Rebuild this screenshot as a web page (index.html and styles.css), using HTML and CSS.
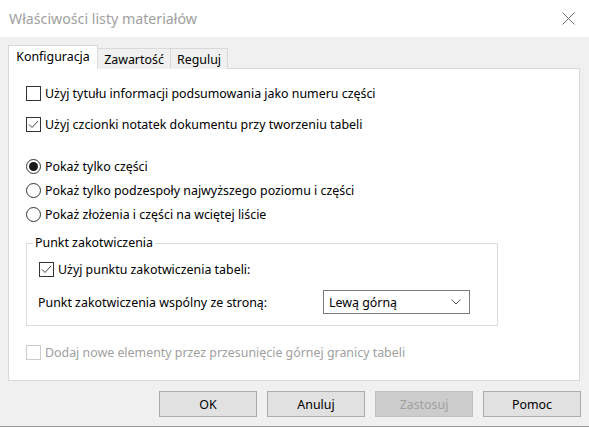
FILE: index.html
```html
<!DOCTYPE html>
<html lang="pl">
<head>
    <meta charset="UTF-8">
    <title>Właściwości listy materiałów</title>
    <link rel="stylesheet" href="styles.css">
</head>
<body>
    <div class="window">
        <div class="titlebar">
            <span class="title">Właściwości listy materiałów</span>
            <svg class="close" width="13" height="13" viewBox="0 0 13 13">
                <path d="M0.5 0.5 L12.5 12.5 M12.5 0.5 L0.5 12.5" stroke="#6e6e6e" stroke-width="1" fill="none"/>
            </svg>
        </div>

        <div class="dialog">
            <div class="tabs">
                <div class="tab tab-active tab-1">Konfiguracja</div>
                <div class="tab tab-2">Zawartość</div>
                <div class="tab tab-3">Reguluj</div>
            </div>

            <div class="panel">
                <label class="option">
                    <span class="box"></span>
                    Użyj tytułu informacji podsumowania jako numeru części
                </label>
                <label class="option opt-2">
                    <span class="box">
                        <svg width="13" height="13" viewBox="0 0 13 13"><path d="M2 6.5 L5 9.5 L11 3" stroke="#444" stroke-width="1" fill="none"/></svg>
                    </span>
                    Użyj czcionki notatek dokumentu przy tworzeniu tabeli
                </label>

                <label class="option radio-first">
                    <span class="radio radio-on"><span class="dot"></span></span>
                    Pokaż tylko części
                </label>
                <label class="option radio-next">
                    <span class="radio"></span>
                    Pokaż tylko podzespoły najwyższego poziomu i części
                </label>
                <label class="option radio-next">
                    <span class="radio"></span>
                    Pokaż złożenia i części na wciętej liście
                </label>

                <fieldset class="group">
                    <legend>Punkt zakotwiczenia</legend>
                    <label class="option group-check">
                        <span class="box">
                            <svg width="13" height="13" viewBox="0 0 13 13"><path d="M2 6.5 L5 9.5 L11 3" stroke="#444" stroke-width="1" fill="none"/></svg>
                        </span>
                        Użyj punktu zakotwiczenia tabeli:
                    </label>
                    <div class="anchor-row">
                        <span class="anchor-label">Punkt zakotwiczenia wspólny ze stroną:</span>
                        <div class="select">
                            <span>Lewą górną</span>
                            <svg width="10" height="6" viewBox="0 0 10 6"><path d="M0.5 0.5 L5 5 L9.5 0.5" stroke="#555" stroke-width="1" fill="none"/></svg>
                        </div>
                    </div>
                </fieldset>

                <label class="option disabled">
                    <span class="box"></span>
                    Dodaj nowe elementy przez przesunięcie górnej granicy tabeli
                </label>
            </div>

            <div class="buttons">
                <button class="btn">OK</button>
                <button class="btn">Anuluj</button>
                <button class="btn btn-disabled">Zastosuj</button>
                <button class="btn">Pomoc</button>
            </div>
        </div>
    </div>
</body>
</html>
```

FILE: styles.css
```css
body {
    margin: 0;
    font-family: 'Noto Sans', 'Open Sans', sans-serif;
    font-size: 12.4px;
    color: #000;
    background: #f0f0f0;
}
.window {
    width: 589px;
    height: 427px;
    box-sizing: border-box;
    border-bottom: 1px solid #9a9a9a;
    overflow: hidden;
}
.titlebar {
    height: 37px;
    background: #ffffff;
    display: flex;
    align-items: center;
    justify-content: space-between;
    padding: 0 14px 0 9px;
}
.title {
    font-size: 14.2px;
    color: #a0a0a0;
}
.dialog {
    padding: 8px 8px 0 8px;
}
.tabs {
    display: flex;
    align-items: flex-end;
    height: 24px;
    margin-bottom: -1px;
}
.tab {
    box-sizing: border-box;
    height: 21px;
    border: 1px solid #d9d9d9;
    border-bottom: none;
    margin-left: -1px;
    display: flex;
    align-items: center;
    justify-content: center;
    background: #f0f0f0;
    padding-top: 1px;
}
.tab-1 { width: 90px; margin-left: 0; }
.tab-2 { width: 73px; margin-left: 0; border-left: none; }
.tab-3 { width: 58px; }
.tab-active {
    height: 24px;
    background: #ffffff;
    position: relative;
    z-index: 1;
    padding-top: 0;
    padding-bottom: 2px;
}
.panel {
    box-sizing: border-box;
    width: 572px;
    height: 313px;
    background: #ffffff;
    border: 1px solid #d9d9d9;
    padding: 17px 17px 0 17px;
    display: flex;
    flex-direction: column;
    align-items: flex-start;
}
.option {
    display: flex;
    align-items: center;
    height: 15px;
    gap: 4px;
    white-space: nowrap;
}
.opt-2 { margin-top: 16px; }
.radio-first { margin-top: 27px; }
.radio-next { margin-top: 9px; }
.box {
    box-sizing: border-box;
    width: 15px;
    height: 15px;
    border: 1px solid #333333;
    background: #ffffff;
    display: flex;
    align-items: center;
    justify-content: center;
    flex: none;
}
.radio {
    box-sizing: border-box;
    width: 15px;
    height: 15px;
    border: 1px solid #333333;
    border-radius: 50%;
    display: flex;
    align-items: center;
    justify-content: center;
    flex: none;
}
.dot {
    width: 9px;
    height: 9px;
    border-radius: 50%;
    background: #1a1a1a;
}
.group {
    box-sizing: border-box;
    width: 472px;
    margin: 13px 0 0 0;
    padding: 0 12px 11px 12px;
    border: 1px solid #dcdcdc;
}
.group legend {
    margin-left: -6px;
    padding: 0 2px;
    line-height: 16px;
}
.group-check {
    margin-top: 11px;
}
.anchor-row {
    display: flex;
    align-items: center;
    margin-top: 13px;
    height: 24px;
}
.anchor-label {
    width: 285px;
    margin-left: -1px;
}
.select {
    box-sizing: border-box;
    width: 147px;
    height: 24px;
    border: 1px solid #7a7a7a;
    display: flex;
    align-items: center;
    justify-content: space-between;
    padding: 0 8px 0 5px;
}
.disabled {
    margin-top: 19px;
    color: #a0a0a0;
}
.disabled .box {
    border-color: #cccccc;
}
.buttons {
    display: flex;
    justify-content: flex-end;
    gap: 10px;
    margin-top: 10px;
}
.btn {
    box-sizing: border-box;
    width: 98px;
    height: 26px;
    font-family: inherit;
    font-size: 12.4px;
    background: #e1e1e1;
    border: 1px solid #adadad;
    color: #000;
    padding: 0;
}
.btn-disabled {
    background: #cccccc;
    border-color: #bfbfbf;
    color: #a0a0a0;
}
```
